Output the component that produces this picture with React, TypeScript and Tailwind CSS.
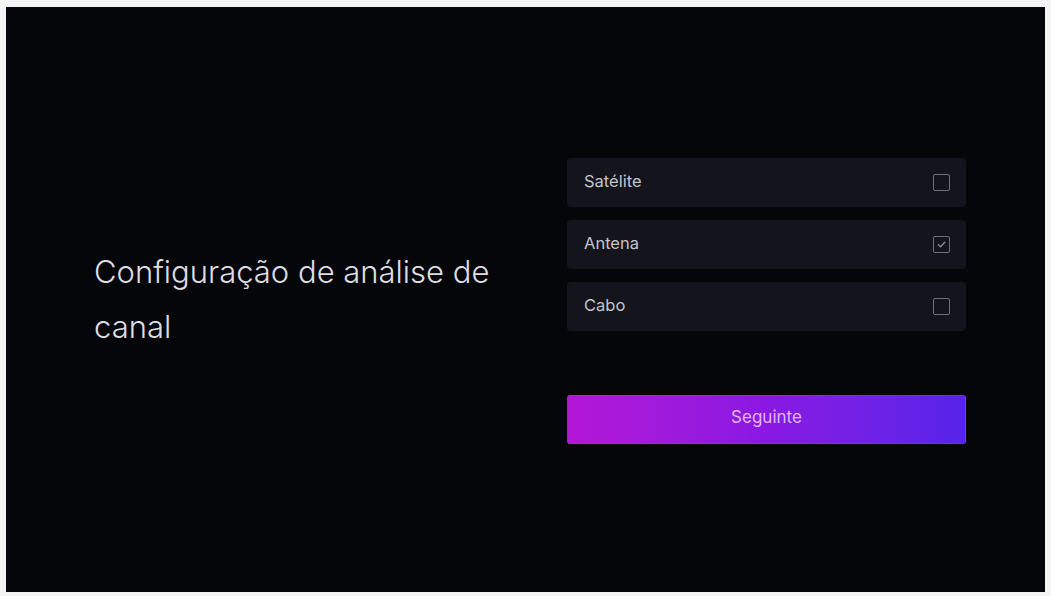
import React from "react";

const options = [
  { label: "Satélite", checked: false },
  { label: "Antena", checked: true },
  { label: "Cabo", checked: false },
];

function Checkbox({ checked }: { checked: boolean }) {
  return (
    <div className="w-[17px] h-[17px] rounded-[2px] border-[1.5px] border-[#6e6e76] flex items-center justify-center">
      {checked && (
        <svg width="11" height="11" viewBox="0 0 12 12" fill="none">
          <path d="M2.5 6.2 L5 8.5 L9.5 3.5" stroke="#8a8a92" strokeWidth="1.5" strokeLinecap="round" strokeLinejoin="round" />
        </svg>
      )}
    </div>
  );
}

export default function App() {
  return (
    <div className="w-[1051px] h-[596px] bg-[#f4f4f4] pt-[7px] pl-[6px] pr-[6px] pb-[4px]" style={{ fontFamily: "Inter, Roboto, 'Liberation Sans', sans-serif" }}>
      <div className="w-full h-full bg-[#05060a] flex items-center pl-[88px]">
        <div className="w-[473px] shrink-0 text-[#dedee2] text-[31px] font-light leading-[55px] -mt-[1px]">
          <div>Configuração de análise de</div>
          <div>canal</div>
        </div>
        <div className="w-[399px] flex flex-col mt-[3px]">
          {options.map((o, i) => (
            <div
              key={o.label}
              className={`h-[49px] rounded-[4px] bg-[#14141c] flex items-center justify-between pl-[17px] pr-[16px] ${i > 0 ? "mt-[13px]" : ""}`}
            >
              <span className="text-[16.5px] text-[#c4c4ca] -mt-[3px]">{o.label}</span>
              <Checkbox checked={o.checked} />
            </div>
          ))}
          <button className="mt-[64px] h-[49px] rounded-[3px] border border-[#7a4fd8]/40 bg-gradient-to-r from-[#b316d6] via-[#8a18e2] to-[#5623ea] text-[#e3b6f2] text-[17px] flex items-center justify-center">
            <span className="-mt-[3px]">Seguinte</span>
          </button>
        </div>
      </div>
    </div>
  );
}
